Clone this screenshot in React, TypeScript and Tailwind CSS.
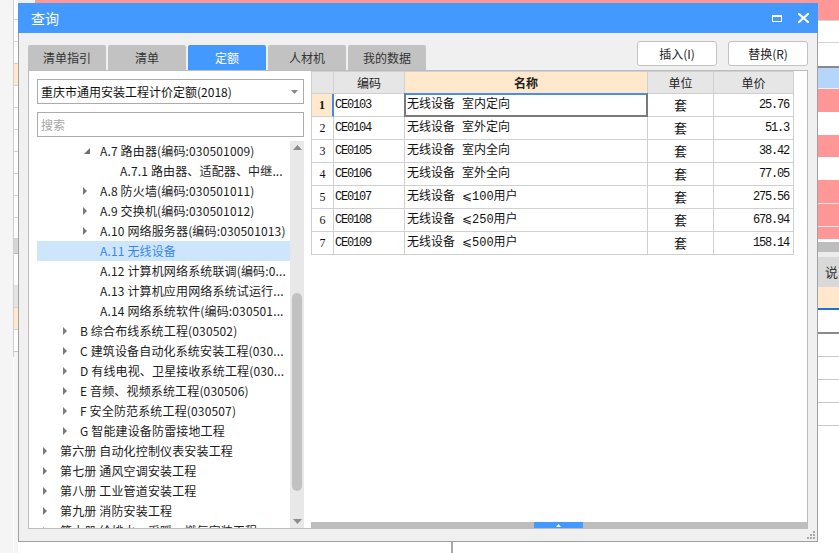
import React from "react";

type TreeNode = { level: number; arrow: "none" | "right" | "down"; text: string; selected?: boolean };

const tree: TreeNode[] = [
  { level: 2, arrow: "down", text: "A.7 路由器(编码:030501009)" },
  { level: 3, arrow: "none", text: "A.7.1 路由器、适配器、中继..." },
  { level: 2, arrow: "right", text: "A.8 防火墙(编码:030501011)" },
  { level: 2, arrow: "right", text: "A.9 交换机(编码:030501012)" },
  { level: 2, arrow: "right", text: "A.10 网络服务器(编码:030501013)" },
  { level: 2, arrow: "none", text: "A.11 无线设备", selected: true },
  { level: 2, arrow: "none", text: "A.12 计算机网络系统联调(编码:0..." },
  { level: 2, arrow: "none", text: "A.13 计算机应用网络系统试运行..." },
  { level: 2, arrow: "none", text: "A.14 网络系统软件(编码:030501..." },
  { level: 1, arrow: "right", text: "B 综合布线系统工程(030502)" },
  { level: 1, arrow: "right", text: "C 建筑设备自动化系统安装工程(030..." },
  { level: 1, arrow: "right", text: "D 有线电视、卫星接收系统工程(030..." },
  { level: 1, arrow: "right", text: "E 音频、视频系统工程(030506)" },
  { level: 1, arrow: "right", text: "F 安全防范系统工程(030507)" },
  { level: 1, arrow: "right", text: "G 智能建设备防雷接地工程" },
  { level: 0, arrow: "right", text: "第六册 自动化控制仪表安装工程" },
  { level: 0, arrow: "right", text: "第七册 通风空调安装工程" },
  { level: 0, arrow: "right", text: "第八册 工业管道安装工程" },
  { level: 0, arrow: "right", text: "第九册 消防安装工程" },
  { level: 0, arrow: "right", text: "第十册 给排水、采暖、燃气安装工程" },
];

const levelPad = ["pl-[6px]", "pl-[26px]", "pl-[46px]", "pl-[66px]"];

const rows = [
  { code: "CE0103", name: "无线设备 室内定向", unit: "套", price: "25.76" },
  { code: "CE0104", name: "无线设备 室外定向", unit: "套", price: "51.3" },
  { code: "CE0105", name: "无线设备 室内全向", unit: "套", price: "38.42" },
  { code: "CE0106", name: "无线设备 室外全向", unit: "套", price: "77.05" },
  { code: "CE0107", name: "无线设备 ⩽100用户", unit: "套", price: "275.56" },
  { code: "CE0108", name: "无线设备 ⩽250用户", unit: "套", price: "678.94" },
  { code: "CE0109", name: "无线设备 ⩽500用户", unit: "套", price: "158.14" },
];

const tabs = ["清单指引", "清单", "定额", "人材机", "我的数据"];

const MONO = "font-['Liberation_Mono','Noto_Sans_CJK_SC',monospace]";

function Arrow({ kind }: { kind: TreeNode["arrow"] }) {
  if (kind === "right")
    return (
      <svg width="5" height="8" viewBox="0 0 5 8">
        <polygon points="0,0 4,4 0,8" fill="#7a7a7a" />
      </svg>
    );
  if (kind === "down")
    return (
      <svg width="7" height="7" viewBox="0 0 7 7" className="ml-[1px]">
        <polygon points="6,0 6,6 0,6" fill="#6e6e6e" />
      </svg>
    );
  return null;
}

function RightStrip() {
  return (
    <div className="w-[22px] flex flex-col">
      <div className="h-[20px] bg-[#ff9797]" />
      <div className="h-[22px] bg-white border-t border-[#d4d4d4]" />
      <div className="h-[24px] bg-white border-t border-[#d4d4d4]" />
      <div className="h-[2px] bg-[#8a8a8a]" />
      <div className="h-[20px] bg-[#b5d5fb]" />
      <div className="h-[24px] bg-[#ff9797] border-t border-[#f0f0f0]" />
      <div className="h-[23px] bg-white" />
      <div className="h-[22px] bg-[#ff9797]" />
      <div className="h-[23px] bg-white" />
      <div className="h-[23px] bg-[#ff9797]" />
      <div className="h-[23px] bg-[#ff9797] border-t border-[#e8e8e8]" />
      <div className="h-[13px] bg-[#ff9797] border-t border-[#e8e8e8]" />
      <div className="h-[3px] bg-white" />
      <div className="h-[10px] bg-[#bdbdbd]" />
      <div className="h-[5px] bg-[#ececec]" />
      <div className="h-[30px] bg-[#d9d9d9] flex items-center pl-[8px] text-[13px] text-[#333]">说</div>
      <div className="h-[21px] bg-[#ffe8cc]" />
      <div className="h-[2px] bg-[#1a6fe0]" />
      <div className="h-[22px] bg-white" />
      <div className="h-[2px] bg-[#8a8a8a]" />
      <div className="h-[23px] bg-white border-b border-[#c8c8c8]" />
      <div className="h-[23px] bg-white border-b border-[#c8c8c8]" />
      <div className="h-[23px] bg-white border-b border-[#c8c8c8]" />
      <div className="h-[23px] bg-white border-b border-[#c8c8c8]" />
      <div className="flex-1 bg-white" />
    </div>
  );
}

function LeftStrip() {
  return (
    <div className="w-[18px] flex">
      <div className="w-[13px] bg-[#f5f5f5]" />
      <div className="w-[1px] bg-[#cfcfcf] h-[357px]" />
      <div className="w-[4px] flex flex-col">
        <div className="h-[20px] bg-white border-b border-[#d4d4d4]" />
        <div className="h-[22px] bg-white border-b border-[#d4d4d4]" />
        <div className="h-[22px] bg-white border-b border-[#d4d4d4]" />
        <div className="h-[22px] bg-[#ffe8cc] border-b border-[#d4d4d4]" />
        <div className="h-[22px] bg-white border-b border-[#d4d4d4]" />
        <div className="h-[22px] bg-white border-b border-[#d4d4d4]" />
        <div className="h-[22px] bg-white border-b border-[#d4d4d4]" />
        <div className="h-[22px] bg-white border-b border-[#d4d4d4]" />
        <div className="h-[22px] bg-white border-b border-[#d4d4d4]" />
        <div className="h-[22px] bg-white border-b border-[#d4d4d4]" />
        <div className="h-[20px] bg-white" />
        <div className="h-[15px] bg-[#d6d6d6]" />
        <div className="h-[32px] bg-white border-t border-[#bdbdbd]" />
        <div className="h-[23px] bg-[#e4e4e4] border-b border-[#d4d4d4]" />
        <div className="h-[22px] bg-[#ffe8cc] border-b border-[#d4d4d4]" />
        <div className="h-[22px] bg-white border-b border-[#c8c8c8]" />
        <div className="flex-1 bg-[#f5f5f5]" />
      </div>
    </div>
  );
}

export default function App() {
  return (
    <div className="relative w-[839px] h-[553px] overflow-hidden bg-white font-['Noto_Sans_CJK_SC','Noto_Sans',sans-serif]">
      {/* background application */}
      <div className="flex w-full h-full">
        <LeftStrip />
        <div className="flex-1 flex flex-col">
          <div className="h-[3px] flex">
            <div className="w-[17px] bg-[#f0f0f0]" />
            <div className="flex-1 bg-[#ff9797]" />
          </div>
          <div className="flex-1" />
          <div className="h-[12px] flex">
            <div className="w-[433px]" />
            <div className="w-[2px] bg-[#a8a8a8]" />
          </div>
        </div>
        <RightStrip />
      </div>

      {/* dialog window */}
      <div className="absolute left-[18px] top-[3px] w-[800px] h-[539px] bg-[#f0f0f0] border-x border-b border-[#a0a0a0] flex flex-col">
        {/* title bar */}
        <div className="h-[30px] -mx-[1px] bg-[#4499ff] flex items-center pl-[13px] pr-[9px] text-white">
          <span className="text-[14px] leading-none">查询</span>
          <div className="ml-auto flex items-center gap-[16px]">
            <div className="w-[10px] h-[7px] border-[1.5px] border-t-[2.5px] border-white" />
            <svg width="11" height="10" viewBox="0 0 11 10">
              <path d="M1 1 L10 9 M10 1 L1 9" stroke="white" strokeWidth="2.2" strokeLinecap="square" />
            </svg>
          </div>
        </div>

        {/* tabs + buttons */}
        <div className="h-[37px] flex pl-[9px] pr-[9px]">
          <div className="flex items-end gap-[2px]">
            {tabs.map((t) => (
              <div
                key={t}
                className={
                  t === "定额"
                    ? "w-[78px] h-[25px] rounded-t-[2px] bg-[#4499ff] text-white text-[12px] flex items-center justify-center"
                    : "w-[78px] h-[25px] rounded-t-[2px] bg-[#c2c2c2] text-[#333] text-[12px] flex items-center justify-center"
                }
              >
                {t}
              </div>
            ))}
          </div>
          <div className="ml-auto flex gap-[11px] mt-[8px]">
            <div className="w-[80px] h-[25px] bg-white border border-[#c3c3c3] rounded-[3px] text-[12px] text-[#222] flex items-center justify-center">
              插入(I)
            </div>
            <div className="w-[80px] h-[25px] bg-white border border-[#c3c3c3] rounded-[3px] text-[12px] text-[#222] flex items-center justify-center">
              替换(R)
            </div>
          </div>
        </div>

        {/* main white panel */}
        <div className="mx-[9px] h-[459px] bg-white border border-[#bcbcbc] flex">
          {/* left tree panel */}
          <div className="w-[276px] pl-[8px] pr-[1px] pt-[8px] flex flex-col">
            <div className="h-[25px] border border-[#ababab] flex items-center pl-[3px] pr-[5px] text-[12px] text-[#111]">
              <span>重庆市通用安装工程计价定额(2018)</span>
              <svg width="7" height="4" viewBox="0 0 7 4" className="ml-auto">
                <polygon points="0,0 7,0 3.5,4" fill="#8a8a8a" />
              </svg>
            </div>
            <div className="mt-[8px] h-[25px] border border-[#ababab] flex items-center pl-[3px] text-[12px] text-[#a6a6a6]">
              搜索
            </div>
            <div className="mt-[4px] flex-1 flex min-h-0">
              <div className="flex-1 overflow-hidden">
                {tree.map((n) => (
                  <div
                    key={n.text}
                    className={
                      (n.selected ? "bg-[#cde6fc] text-[#3a86ea] " : "text-[#1c1c1c] ") +
                      levelPad[n.level] +
                      " h-[20px] flex items-center text-[12px] tracking-[0.15px] whitespace-nowrap"
                    }
                  >
                    <div className="w-[17px] flex items-center">
                      <Arrow kind={n.arrow} />
                    </div>
                    <span>{n.text}</span>
                  </div>
                ))}
              </div>
              {/* vertical scrollbar */}
              <div className="w-[14px] bg-[#e8e8e8] flex flex-col items-center">
                <svg width="9" height="5" viewBox="0 0 9 5" className="mt-[4px]">
                  <polygon points="0,5 9,5 4.5,0" fill="#8c8c8c" />
                </svg>
                <div className="mt-[143px] w-[10px] h-[198px] rounded-full bg-[#c1c1c1]" />
                <svg width="9" height="5" viewBox="0 0 9 5" className="mt-auto mb-[4px]">
                  <polygon points="0,0 9,0 4.5,5" fill="#8c8c8c" />
                </svg>
              </div>
            </div>
          </div>

          {/* right table panel */}
          <div className="ml-[6px] flex-1 flex flex-col">
            <div className="flex-1">
              <div className="border-l border-t border-[#d0d0d0] w-[483px]">
                {/* header */}
                <div className="flex h-[22px] text-[12px] text-[#222]">
                  <div className="w-[22px] bg-[#e6e6e6] border-r border-b border-[#d0d0d0]" />
                  <div className="w-[71px] bg-[#e6e6e6] border-r border-b border-[#d0d0d0] flex items-center justify-center">编码</div>
                  <div className="w-[243px] bg-[#ffe8cc] border-r border-b border-[#d0d0d0] flex items-center justify-center font-bold">名称</div>
                  <div className="w-[66px] bg-[#e6e6e6] border-r border-b border-[#d0d0d0] flex items-center justify-center">单位</div>
                  <div className="w-[80px] bg-[#e6e6e6] border-r border-b border-[#d0d0d0] flex items-center justify-center">单价</div>
                </div>
                {rows.map((r, i) => (
                  <div key={r.code} className="flex h-[23px] text-[#111]">
                    <div
                      className={
                        i === 0
                          ? "w-[22px] bg-[#ffe8cc] border-r-[2px] border-r-[#3d8bef] border-b border-b-[#d0d0d0] flex items-center justify-center text-[12px] font-bold font-['Liberation_Serif',serif]"
                          : "w-[22px] bg-white border-r border-b border-[#d0d0d0] flex items-center justify-center text-[12px] font-['Liberation_Serif',serif]"
                      }
                    >
                      {i + 1}
                    </div>
                    <div className={"w-[71px] border-r border-b border-[#d0d0d0] flex items-center pl-[1px] text-[12px] tracking-[-1.2px] " + MONO}>
                      {r.code}
                    </div>
                    <div className={"relative w-[243px] border-r border-b border-[#d0d0d0] flex items-center pl-[2px] text-[12px] whitespace-pre " + MONO}>
                      {r.name.split(" ")[0]}
                      <span className="w-[7px]" />
                      {r.name.split(" ")[1]}
                      {i === 0 && (
                        <div className="absolute -left-[1px] -top-[1px] -right-[1px] -bottom-[1px] border-2 border-[#7a7a7a] border-t-[#4a90e2]" />
                      )}
                    </div>
                    <div className="w-[66px] border-r border-b border-[#d0d0d0] flex items-center justify-center text-[13px]">
                      {r.unit}
                    </div>
                    <div className={"w-[80px] border-r border-b border-[#d0d0d0] flex items-center justify-end pr-[4px] text-[12px] tracking-[-1.2px] " + MONO}>
                      {r.price}
                    </div>
                  </div>
                ))}
              </div>
            </div>
            {/* horizontal scrollbar */}
            <div className="h-[6px] bg-[#bdbdbd] flex">
              <div className="w-[223px]" />
              <div className="w-[49px] bg-[#4499ff] flex items-center justify-center">
                <svg width="5" height="3" viewBox="0 0 5 3">
                  <polygon points="0,3 5,3 2.5,0" fill="white" />
                </svg>
              </div>
            </div>
          </div>
        </div>

        {/* resize grip */}
        <div className="mt-auto mb-[2px] mr-[2px] self-end">
          <svg width="8" height="8" viewBox="0 0 8 8">
            <rect x="6" y="0" width="2" height="2" fill="#a8a8a8" />
            <rect x="3" y="3" width="2" height="2" fill="#a8a8a8" />
            <rect x="6" y="3" width="2" height="2" fill="#a8a8a8" />
            <rect x="0" y="6" width="2" height="2" fill="#a8a8a8" />
            <rect x="3" y="6" width="2" height="2" fill="#a8a8a8" />
            <rect x="6" y="6" width="2" height="2" fill="#a8a8a8" />
          </svg>
        </div>
      </div>
    </div>
  );
}
